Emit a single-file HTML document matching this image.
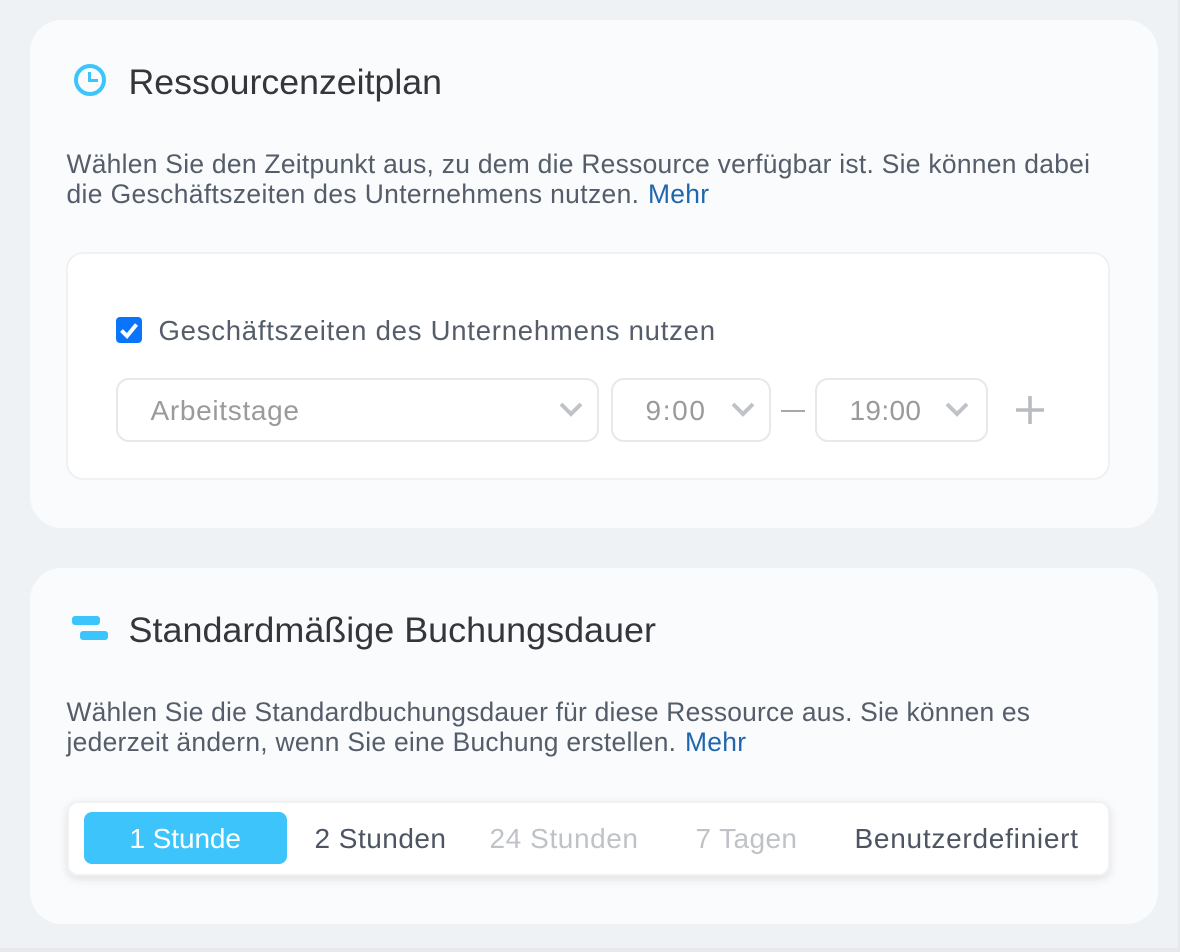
<!DOCTYPE html>
<html><head><meta charset="utf-8">
<style>
html,body{margin:0;padding:0;width:1180px;height:952px;overflow:hidden;background:#eff2f5}
svg{display:block;position:absolute;left:0;top:0}
text{font-family:"Liberation Sans",sans-serif;white-space:pre}
.t{font-size:35px;fill:#33363b}
.b{font-size:26.4px;fill:#545d69}
.m{fill:#1f66ad}
.g{fill:#9a9a9a;font-size:28px}
.k{font-size:28px}
</style></head><body>
<svg width="1180" height="952" viewBox="0 0 1180 952" xmlns="http://www.w3.org/2000/svg">
<defs>
<filter id="s" x="-5%" y="-30%" width="110%" height="170%"><feDropShadow dx="0" dy="3" stdDeviation="4.500" flood-color="#000" flood-opacity=".11"/></filter>
</defs>
<rect x="1178" y="0" width="2" height="952" fill="#e6e8eb"/>
<rect x="0" y="948" width="1180" height="4" fill="#e6e8eb"/>
<rect x="30" y="20" width="1128" height="508" rx="32" fill="#fafbfd"/>
<rect x="30" y="568" width="1128" height="356" rx="32" fill="#fafbfd"/>

<circle cx="90" cy="80" r="14" fill="none" stroke="#3cc5fb" stroke-width="4"/>
<path d="M88 72H91V79H98V82H88Z" fill="#3cc5fb"/>
<text class="t" x="128.500" y="94" textLength="313.500" lengthAdjust="spacingAndGlyphs">Ressourcenzeitplan</text>

<text class="b" x="66.500" y="173" textLength="1023.500" lengthAdjust="spacing">Wählen Sie den Zeitpunkt aus, zu dem die Ressource verfügbar ist. Sie können dabei</text>
<text class="b" x="66.500" y="203" textLength="572.500" lengthAdjust="spacing">die Geschäftszeiten des Unternehmens nutzen.</text>
<text class="b m" x="648" y="203" textLength="61" lengthAdjust="spacing">Mehr</text>

<rect x="67" y="253" width="1042" height="226" rx="16" fill="#fff" stroke="#eceef0" stroke-width="1.600"/>

<rect x="116" y="317" width="26" height="26" rx="4" fill="#0a75fb"/>
<path d="M121.500 330.500L127 336L136.500 324.500" fill="none" stroke="#fff" stroke-width="4"/>
<text class="b" style="font-size:27.500px" x="158.500" y="340" textLength="556.500" lengthAdjust="spacing">Geschäftszeiten des Unternehmens nutzen</text>

<rect x="117" y="379" width="481" height="62" rx="12" fill="#fff" stroke="#e6e8ea" stroke-width="2"/>
<text class="g" x="150.500" y="420" textLength="148.500" lengthAdjust="spacing">Arbeitstage</text>
<path d="M561 404L571 414L581 404" fill="none" stroke="#bfc3c8" stroke-width="4"/>

<rect x="612" y="379" width="158" height="62" rx="12" fill="#fff" stroke="#e6e8ea" stroke-width="2"/>
<text class="g" x="645.500" y="420" textLength="59.500" lengthAdjust="spacing">9:00</text>
<path d="M733 404L743 414L753 404" fill="none" stroke="#bfc3c8" stroke-width="4"/>

<rect x="781" y="410" width="24" height="2" fill="#a8a8a8"/>

<rect x="816" y="379" width="171" height="62" rx="12" fill="#fff" stroke="#e6e8ea" stroke-width="2"/>
<text class="g" x="849.500" y="420" textLength="71.500" lengthAdjust="spacing">19:00</text>
<path d="M947 404L957 414L967 404" fill="none" stroke="#bfc3c8" stroke-width="4"/>

<path d="M1016 410H1044M1030 396V424" fill="none" stroke="#b8bcc2" stroke-width="3.600"/>

<rect x="72" y="616" width="28" height="9" rx="3" fill="#3cc5fb"/>
<rect x="80" y="631" width="28" height="9" rx="3" fill="#3cc5fb"/>
<text class="t" x="128.500" y="642" textLength="527.500" lengthAdjust="spacingAndGlyphs">Standardmäßige Buchungsdauer</text>

<text class="b" x="66.500" y="721" textLength="963.500" lengthAdjust="spacing">Wählen Sie die Standardbuchungsdauer für diese Ressource aus. Sie können es</text>
<text class="b" x="66.500" y="751" textLength="609.500" lengthAdjust="spacing">jederzeit ändern, wenn Sie eine Buchung erstellen.</text>
<text class="b m" x="685" y="751" textLength="61" lengthAdjust="spacing">Mehr</text>

<rect x="68" y="802" width="1041" height="73" rx="10" fill="#fff" stroke="#f0f1f3" stroke-width="2" filter="url(#s)"/>
<rect x="84" y="812" width="203" height="52" rx="8" fill="#3dc4fb"/>
<text class="k" style="fill:#fff" x="129.500" y="848" textLength="111.500" lengthAdjust="spacing">1 Stunde</text>
<text class="k" style="fill:#4d5562" x="314.500" y="848" textLength="131.500" lengthAdjust="spacing">2 Stunden</text>
<text class="k" style="fill:#bfc3c8" x="489.500" y="848" textLength="148.500" lengthAdjust="spacing">24 Stunden</text>
<text class="k" style="fill:#bfc3c8" x="695.500" y="848" textLength="101.500" lengthAdjust="spacing">7 Tagen</text>
<text class="k" style="fill:#4d5562" x="854.500" y="848" textLength="223.500" lengthAdjust="spacing">Benutzerdefiniert</text>
</svg>
</body></html>
